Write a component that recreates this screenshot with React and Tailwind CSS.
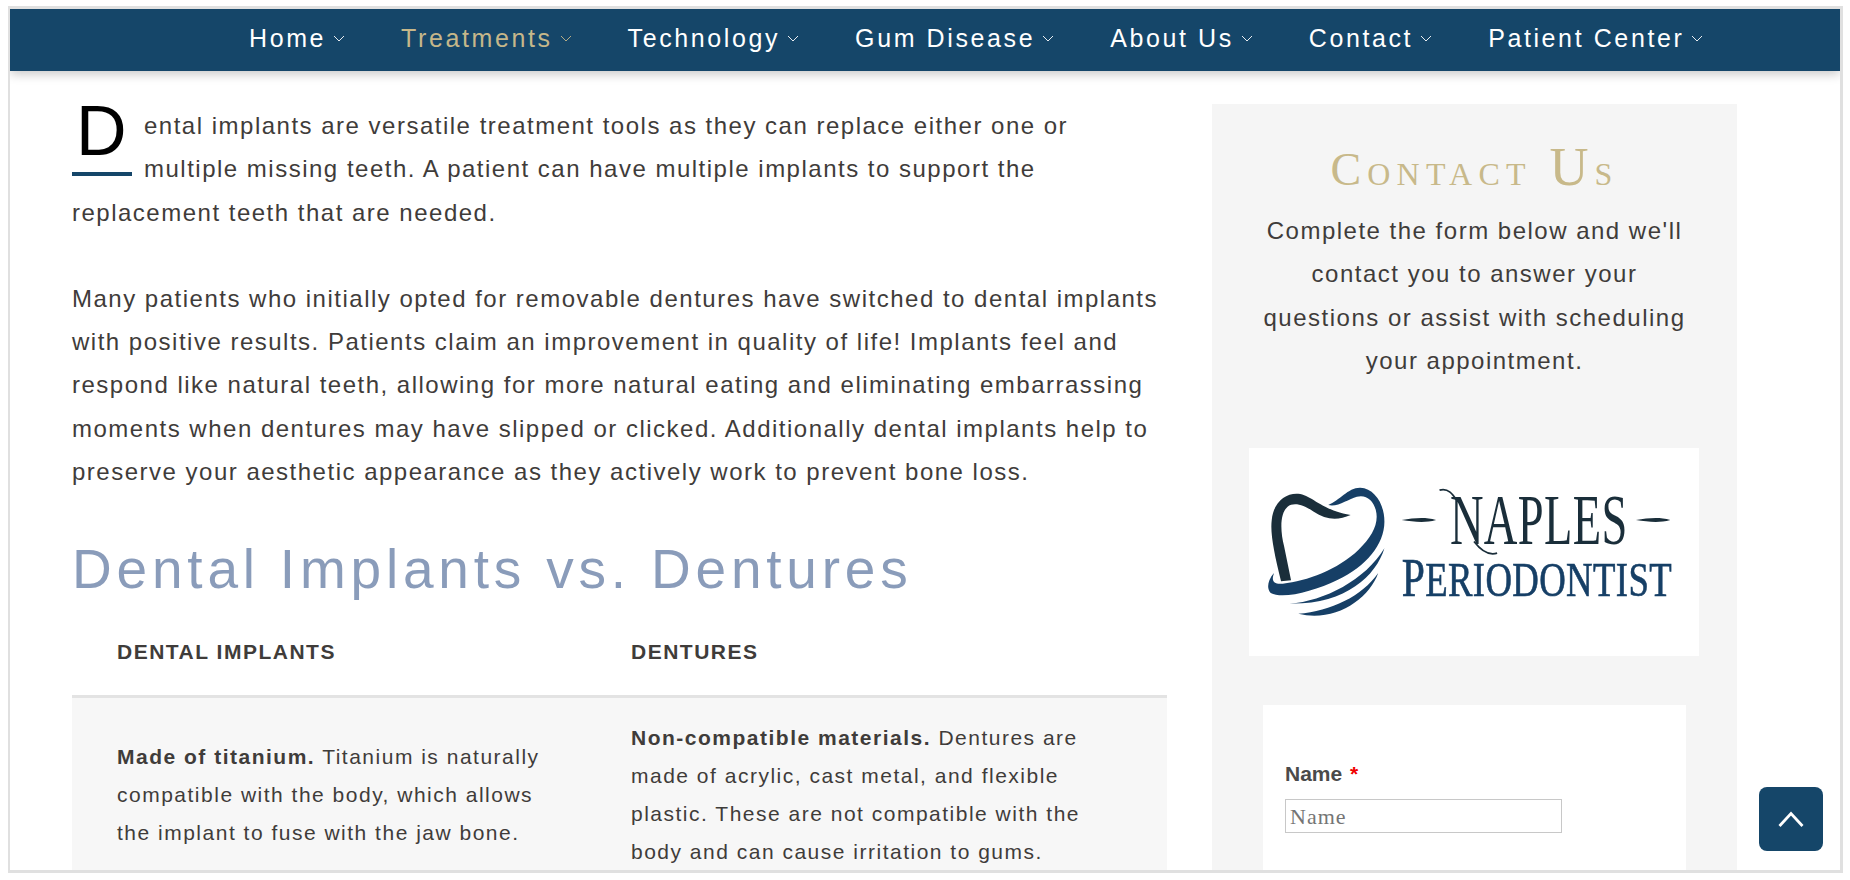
import React from "react";

const navItems = ["Home", "Treatments", "Technology", "Gum Disease", "About Us", "Contact", "Patient Center"];

function Chevron() {
  return (
    <svg width="12" height="7" viewBox="0 0 12 7" fill="none" stroke="currentColor" strokeWidth="1" className="opacity-90">
      <path d="M1 1 L6 6 L11 1" />
    </svg>
  );
}

function Logo() {
  return (
    <svg viewBox="142 53 1306 627" preserveAspectRatio="none" className="block h-[208px] w-[450px] blur-[0.3px]">
      <rect x="142" y="53" width="1306" height="627" fill="#ffffff" />
      <path fill="#1a2e3a" d="M235 455 C215 370 203 310 208 270 C213 215 250 188 285 191 C325 195 350 240 437 255 C400 272 365 270 330 245 C300 224 272 215 254 230 C232 250 232 300 244 350 L264 452 Z" />
      <path fill="#163f66" d="M372 225 C405 212 430 172 465 173 C505 175 535 220 535 275 C535 345 480 410 400 450 C330 485 240 510 205 490 C190 475 200 445 215 430 C205 455 215 465 240 462 C310 455 400 420 460 360 C500 320 520 280 510 240 C503 210 480 192 455 200 C430 207 400 232 372 225 Z" />
      <path fill="#163f66" d="M260 522 C360 515 480 450 535 355 C510 440 420 525 260 522 Z" />
      <path fill="#163f66" d="M285 553 C380 545 470 500 517 430 C490 510 390 580 285 553 Z" />
      <path fill="#1a2e3a" d="M585 270 C620 265 650 260 685 270 C650 280 620 275 585 270 Z" />
      <path fill="#1a2e3a" d="M1265 270 C1300 265 1330 260 1365 270 C1330 280 1300 275 1265 270 Z" />
      <path fill="none" stroke="#1a2e3a" strokeWidth="5" d="M695 180 C722 172 735 195 748 215 M795 335 C815 362 838 378 862 370" />
      <text transform="translate(725 342) scale(0.628 1)" fontFamily="'Liberation Serif', serif" fontSize="215" fill="#1a2e3a">NAPLES</text>
      <text transform="translate(585 500) scale(0.74 1)" fontFamily="'Liberation Serif', serif" fontSize="163" fill="#163f66" stroke="#163f66" strokeWidth="2">
        P<tspan fontSize="144">ERIODONTIST</tspan>
      </text>
    </svg>
  );
}

export default function App() {
  return (
    <div className="relative h-[880px] w-[1850px] overflow-hidden bg-white font-['Liberation_Sans',sans-serif] text-[24px] leading-[43.3px] tracking-[1.5px] text-[#3f3c3a]">
      <div className="ml-[8px] mt-[6px] h-[867px] w-[1835px] overflow-hidden border-[3px] border-l-2 border-[#e0e0e0]">
        <nav className="relative z-10 flex h-[62px] items-center gap-[56px] bg-[#154669] pb-[2px] pl-[239px] text-[25px] tracking-[2.6px] text-white shadow-[0_3px_10px_rgba(0,0,0,0.22)]">
          {navItems.map((item) => (
            <a key={item} className={`flex items-center gap-[7px] ${item === "Treatments" ? "text-[#c5b78a]" : ""}`}>
              {item}
              <Chevron />
            </a>
          ))}
        </nav>

        <div className="flex items-start pl-[62px]">
          <main className="w-[1095px] pt-[33px]">
            <p>
              <span className="float-left mr-[12px] mt-[-8px] block h-[80px] w-[60px] border-b-4 border-[#154669] pl-[4px] text-[70px] leading-[70px] tracking-normal text-black">
                D
              </span>
              ental implants are versatile treatment tools as they can replace either one or multiple missing teeth. A patient can have multiple implants to support the replacement teeth that are needed.
            </p>
            <p className="mt-[43px]">
              Many patients who initially opted for removable dentures have switched to dental implants with positive results. Patients claim an improvement in quality of life! Implants feel and respond like natural teeth, allowing for more natural eating and eliminating embarrassing moments when dentures may have slipped or clicked. Additionally dental implants help to preserve your aesthetic appearance as they actively work to prevent bone loss.
            </p>
            <h2 className="mt-[43px] text-[55px] leading-[66px] font-normal tracking-[4.8px] text-[#8a9cba]">Dental Implants vs. Dentures</h2>
            <div className="mt-[9px] grid grid-cols-[514px_581px] text-[21px] leading-[38px] tracking-[1.5px]">
              <div className="h-[87px] border-b-[3px] border-[#e3e3e3] pl-[45px] pt-[22px] font-bold">DENTAL IMPLANTS</div>
              <div className="h-[87px] border-b-[3px] border-[#e3e3e3] pl-[45px] pt-[22px] font-bold">DENTURES</div>
              <div className="flex h-[200px] bg-[#f7f7f7] pl-[45px] pr-[40px] pt-[40px]">
                <p><b>Made of titanium.</b> Titanium is naturally compatible with the body, which allows the implant to fuse with the jaw bone.</p>
              </div>
              <div className="h-[200px] bg-[#f7f7f7] pl-[45px] pr-[40px] pt-[21px]">
                <p><b>Non-compatible materials.</b> Dentures are made of acrylic, cast metal, and flexible plastic. These are not compatible with the body and can cause irritation to gums.</p>
              </div>
            </div>
          </main>

          <aside className="ml-[45px] mt-[33px] w-[525px] bg-[#f5f5f5] pb-[60px]">
            <h3 className="mt-[35px] text-center font-['Liberation_Serif',serif] text-[46px] leading-[56px] font-normal tracking-[6.2px] text-[#c8b98a] [font-variant:small-caps]">
              Contact <span className="text-[54px]">U</span>s
            </h3>
            <p className="mx-auto mt-[11px] w-[440px] text-center">
              Complete the form below and we'll contact you to answer your questions or assist with scheduling your appointment.
            </p>
            <div className="ml-[37px] mt-[66px]">
              <Logo />
            </div>
            <form className="ml-[51px] mt-[49px] h-[300px] w-[423px] bg-white pl-[22px] pt-[51px]">
              <label className="block text-[21px] leading-[36px] font-bold tracking-normal text-[#4a4a4a]">
                Name <span className="ml-[2px] text-[#f00000]">*</span>
              </label>
              <input
                placeholder="Name"
                className="mt-[7px] block h-[34px] w-[277px] border-[1.5px] border-[#c8c8c8] bg-white px-[4px] font-['Liberation_Serif',serif] text-[22px] tracking-[1px] placeholder:text-[#757575]"
              />
            </form>
          </aside>
        </div>
      </div>

      <button className="absolute left-[1759px] top-[787px] flex h-[64px] w-[64px] items-center justify-center rounded-lg bg-[#154669]">
        <svg width="28" height="18" viewBox="0 0 28 18" fill="none" stroke="white" strokeWidth="2.8">
          <path d="M2.5 16 L14 3.5 L25.5 16" />
        </svg>
      </button>
    </div>
  );
}
